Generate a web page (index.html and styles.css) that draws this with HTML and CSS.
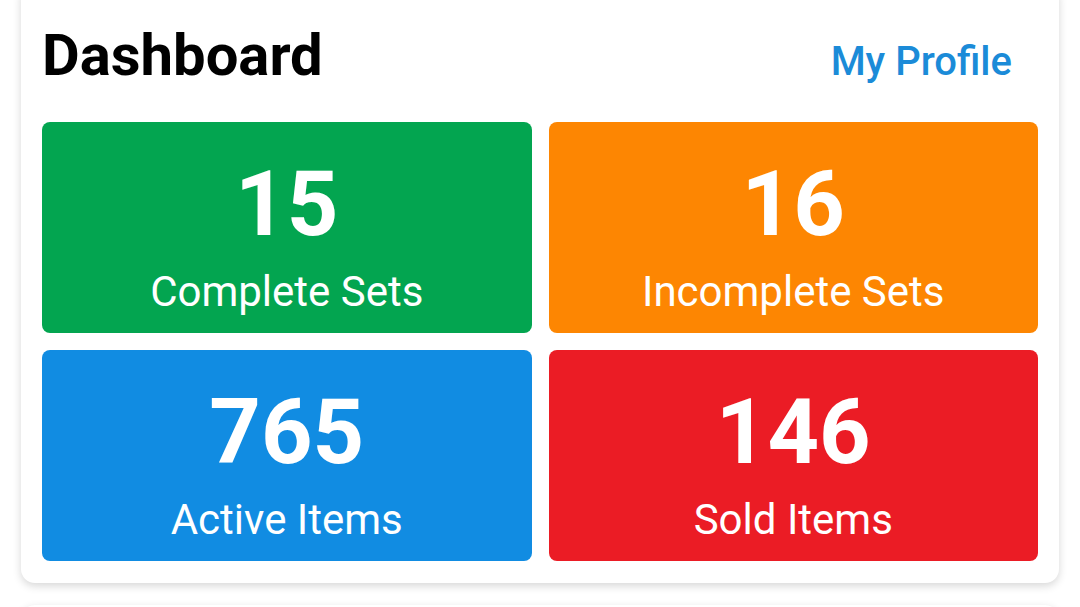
FILE: index.html
```html
<!DOCTYPE html>
<html lang="en">
<head>
    <meta charset="UTF-8">
    <meta name="viewport" content="width=device-width, initial-scale=1.0">
    <title>Dashboard</title>
    <link rel="stylesheet" href="styles.css">
</head>
<body>
    <div class="page">
        <div class="card">
            <div class="card-header">
                <h1>Dashboard</h1>
                <a class="profile-link" href="#">My Profile</a>
            </div>

            <div class="stats">
                <div class="stat-tile green">
                    <div class="stat-value">15</div>
                    <div class="stat-label">Complete Sets</div>
                </div>
                <div class="stat-tile orange">
                    <div class="stat-value">16</div>
                    <div class="stat-label">Incomplete Sets</div>
                </div>
                <div class="stat-tile blue">
                    <div class="stat-value">765</div>
                    <div class="stat-label">Active Items</div>
                </div>
                <div class="stat-tile red">
                    <div class="stat-value">146</div>
                    <div class="stat-label">Sold Items</div>
                </div>
            </div>
        </div>

        <div class="card next-card"></div>
    </div>
</body>
</html>
```

FILE: styles.css
```css
* {
    margin: 0;
    padding: 0;
    box-sizing: border-box;
}

body {
    font-family: Roboto, 'Noto Sans', sans-serif;
    background: #ffffff;
    height: 100vh;
    overflow: hidden;
}

.page {
    padding: 0 21px;
}

.card {
    background: white;
    border-radius: 14px;
    margin-top: -16px;
    padding: 16px 21px 22px;
    box-shadow: 0 3px 8px rgba(0,0,0,0.16);
}

.next-card {
    margin-top: 22px;
    height: 30px;
}

.card-header {
    display: flex;
    justify-content: space-between;
    align-items: baseline;
    padding-top: 21px;
    margin-bottom: 33px;
}

h1 {
    font-size: 58px;
    line-height: 68px;
    font-weight: 700;
    color: #000;
}

.profile-link {
    font-size: 40px;
    font-weight: 500;
    color: #1b8bd8;
    text-decoration: none;
    margin-right: 26px;
}

.stats {
    display: grid;
    grid-template-columns: 1fr 1fr;
    gap: 17px;
}

.stat-tile {
    height: 211px;
    border-radius: 8px;
    padding-top: 33px;
    display: flex;
    flex-direction: column;
    align-items: center;
    gap: 13px;
    color: white;
}

.stat-value {
    font-size: 90px;
    line-height: 100px;
    font-weight: 700;
}

.stat-label {
    font-size: 42px;
    line-height: 48px;
}

.green { background: #03a550; }
.orange { background: #fd8602; }
.blue { background: #118ce2; }
.red { background: #eb1c25; }
```
